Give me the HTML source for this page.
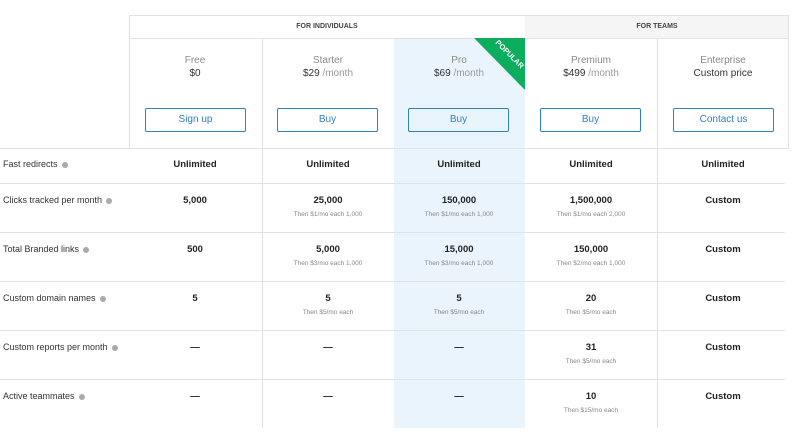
<!DOCTYPE html>
<html><head><style>
*{margin:0;padding:0;box-sizing:border-box}
body{width:793px;height:437px;background:#fff;font-family:"Liberation Sans",sans-serif;position:relative;overflow:hidden;color:#222}
.a{position:absolute}
.hl{position:absolute;height:1px;background:#e2e2e2}
.vl{position:absolute;width:1px;background:#e2e2e2}
.c{position:absolute;text-align:center;width:132px}
.name{font-size:10px;color:#8a8a8a;line-height:13px}
.price{font-size:10px;color:#333;line-height:13px}
.price span{color:#999}
.btn{position:absolute;width:101px;height:24px;border:1px solid #2f80c2;border-radius:2px;color:#2f80c2;font-size:10px;text-align:center;line-height:22px}
.v{font-size:9.5px;font-weight:bold;color:#222}
.s{font-size:6.5px;color:#888;margin-top:5px}
.lab{position:absolute;left:3px;font-size:9px;color:#333}
.lab i{display:inline-block;width:6px;height:6px;border-radius:50%;background:#aaa;margin-left:4px;vertical-align:-1px}
</style></head><body>
<div class="a" style="left:394px;top:38px;width:131px;height:390px;background:#e9f4fd"></div>
<div class="a" style="left:525px;top:15px;width:264px;height:23px;background:#f5f5f5"></div>
<div class="a" style="left:129px;top:15px;width:660px;height:133px;border:1px solid #e2e2e2;border-bottom:none"></div>
<div class="hl" style="left:129px;top:38px;width:660px"></div>
<div class="a" style="left:129px;top:23px;width:396px;text-align:center;font-size:7px;color:#444;font-weight:bold">FOR INDIVIDUALS</div>
<div class="a" style="left:525px;top:23px;width:264px;text-align:center;font-size:7px;color:#444;font-weight:bold">FOR TEAMS</div>
<div class="vl" style="left:262px;top:38px;height:390px"></div>
<div class="vl" style="left:657px;top:38px;height:390px"></div>
<svg class="a" style="left:474px;top:38px" width="51" height="52"><polygon points="0,0 51,0 51,52" fill="#0aae5c"/><text x="34" y="18" transform="rotate(45 34 18)" font-size="7.5" font-weight="bold" fill="#fff" text-anchor="middle" font-family="Liberation Sans">POPULAR</text></svg>

<div class="c" style="left:129px;top:54px"><div class="name">Free</div><div class="price">$0</div></div>
<div class="c" style="left:262px;top:54px"><div class="name">Starter</div><div class="price">$29 <span>/month</span></div></div>
<div class="c" style="left:393px;top:54px"><div class="name">Pro</div><div class="price">$69 <span>/month</span></div></div>
<div class="c" style="left:525px;top:54px"><div class="name">Premium</div><div class="price">$499 <span>/month</span></div></div>
<div class="c" style="left:657px;top:54px"><div class="name">Enterprise</div><div class="price">Custom price</div></div>

<div class="btn" style="left:145px;top:108px">Sign up</div>
<div class="btn" style="left:277px;top:108px">Buy</div>
<div class="btn" style="left:408px;top:108px">Buy</div>
<div class="btn" style="left:540px;top:108px">Buy</div>
<div class="btn" style="left:673px;top:108px">Contact us</div>

<div class="hl" style="left:0;top:148px;width:789px"></div>
<div class="hl" style="left:0;top:183px;width:785px"></div>
<div class="hl" style="left:0;top:232px;width:785px"></div>
<div class="hl" style="left:0;top:281px;width:785px"></div>
<div class="hl" style="left:0;top:330px;width:785px"></div>
<div class="hl" style="left:0;top:379px;width:785px"></div>

<div class="lab" style="top:159px">Fast redirects<i></i></div>
<div class="lab" style="top:195px">Clicks tracked per month<i></i></div>
<div class="lab" style="top:244px">Total Branded links<i></i></div>
<div class="lab" style="top:293px">Custom domain names<i></i></div>
<div class="lab" style="top:342px">Custom reports per month<i></i></div>
<div class="lab" style="top:391px">Active teammates<i></i></div>

<div class="c" style="left:129px;top:159px"><div class="v">Unlimited</div></div>
<div class="c" style="left:262px;top:159px"><div class="v">Unlimited</div></div>
<div class="c" style="left:393px;top:159px"><div class="v">Unlimited</div></div>
<div class="c" style="left:525px;top:159px"><div class="v">Unlimited</div></div>
<div class="c" style="left:657px;top:159px"><div class="v">Unlimited</div></div>

<div class="c" style="left:129px;top:195px"><div class="v">5,000</div></div>
<div class="c" style="left:262px;top:195px"><div class="v">25,000</div><div class="s">Then $1/mo each 1,000</div></div>
<div class="c" style="left:393px;top:195px"><div class="v">150,000</div><div class="s">Then $1/mo each 1,000</div></div>
<div class="c" style="left:525px;top:195px"><div class="v">1,500,000</div><div class="s">Then $1/mo each 2,000</div></div>
<div class="c" style="left:657px;top:195px"><div class="v">Custom</div></div>

<div class="c" style="left:129px;top:244px"><div class="v">500</div></div>
<div class="c" style="left:262px;top:244px"><div class="v">5,000</div><div class="s">Then $3/mo each 1,000</div></div>
<div class="c" style="left:393px;top:244px"><div class="v">15,000</div><div class="s">Then $3/mo each 1,000</div></div>
<div class="c" style="left:525px;top:244px"><div class="v">150,000</div><div class="s">Then $2/mo each 1,000</div></div>
<div class="c" style="left:657px;top:244px"><div class="v">Custom</div></div>

<div class="c" style="left:129px;top:293px"><div class="v">5</div></div>
<div class="c" style="left:262px;top:293px"><div class="v">5</div><div class="s">Then $5/mo each</div></div>
<div class="c" style="left:393px;top:293px"><div class="v">5</div><div class="s">Then $5/mo each</div></div>
<div class="c" style="left:525px;top:293px"><div class="v">20</div><div class="s">Then $5/mo each</div></div>
<div class="c" style="left:657px;top:293px"><div class="v">Custom</div></div>

<div class="c" style="left:129px;top:342px"><div class="v">—</div></div>
<div class="c" style="left:262px;top:342px"><div class="v">—</div></div>
<div class="c" style="left:393px;top:342px"><div class="v">—</div></div>
<div class="c" style="left:525px;top:342px"><div class="v">31</div><div class="s">Then $5/mo each</div></div>
<div class="c" style="left:657px;top:342px"><div class="v">Custom</div></div>

<div class="c" style="left:129px;top:391px"><div class="v">—</div></div>
<div class="c" style="left:262px;top:391px"><div class="v">—</div></div>
<div class="c" style="left:393px;top:391px"><div class="v">—</div></div>
<div class="c" style="left:525px;top:391px"><div class="v">10</div><div class="s">Then $15/mo each</div></div>
<div class="c" style="left:657px;top:391px"><div class="v">Custom</div></div>
</body></html>
